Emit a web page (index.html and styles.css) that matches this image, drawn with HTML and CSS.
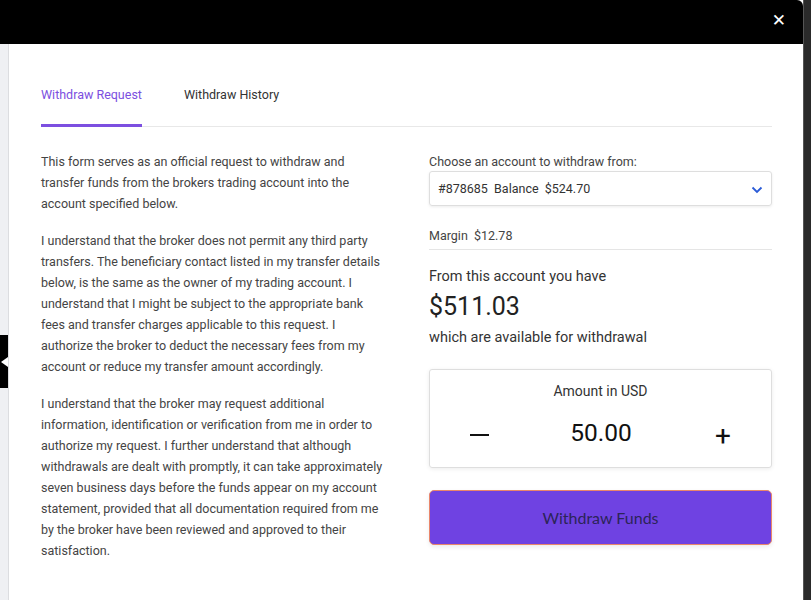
FILE: index.html
```html
<!DOCTYPE html>
<html>
<head>
<meta charset="utf-8">
<link rel="stylesheet" href="styles.css">
</head>
<body>
<div class="page">
  <div class="main">
    <div class="topbar">
      <span class="close">&#10005;</span>
    </div>
    <div class="content">
      <div class="sidestrip">
        <div class="sidetab">
          <svg width="8" height="14" viewBox="0 0 8 14"><path d="M8 2 L1 7 L8 12 Z" fill="#fff"/></svg>
        </div>
      </div>
      <div class="modal">
        <div class="tabs">
          <div class="tab active">Withdraw Request</div>
          <div class="tab">Withdraw History</div>
        </div>
        <div class="columns">
          <div class="terms">
            <p>This form serves as an official request to withdraw and transfer funds from the brokers trading account into the account specified below.</p>
            <p>I understand that the broker does not permit any third party transfers. The beneficiary contact listed in my transfer details below, is the same as the owner of my trading account. I understand that I might be subject to the appropriate bank fees and transfer charges applicable to this request. I authorize the broker to deduct the necessary fees from my account or reduce my transfer amount accordingly.</p>
            <p>I understand that the broker may request additional information, identification or verification from me in order to authorize my request. I further understand that although withdrawals are dealt with promptly, it can take approximately seven business days before the funds appear on my account statement, provided that all documentation required from me by the broker have been reviewed and approved to their satisfaction.</p>
          </div>
          <div class="form">
            <div class="label">Choose an account to withdraw from:</div>
            <div class="select">
              <span>#878685&nbsp; Balance&nbsp; $524.70</span>
              <svg width="12" height="8" viewBox="0 0 12 8"><path d="M1.5 1.5 L6 6 L10.5 1.5" fill="none" stroke="#2a5bd7" stroke-width="1.8"/></svg>
            </div>
            <div class="margin">Margin&nbsp; $12.78</div>
            <div class="avail">
              <div class="avail-text">From this account you have</div>
              <div class="avail-amount">$511.03</div>
              <div class="avail-text">which are available for withdrawal</div>
            </div>
            <div class="amount-box">
              <div class="amount-label">Amount in USD</div>
              <div class="amount-row">
                <span class="step minus"></span>
                <span class="amount-value">50.00</span>
                <span class="step plus">+</span>
              </div>
            </div>
            <button class="submit">Withdraw Funds</button>
          </div>
        </div>
      </div>
    </div>
  </div>
  <div class="rightstrip"></div>
</div>
</body>
</html>
```

FILE: styles.css
```css
html, body {
  margin: 0;
  padding: 0;
  height: 100%;
  overflow: hidden;
}
body {
  font-family: Roboto, "Liberation Sans", sans-serif;
  background: #2a2a2a;
}
.page {
  display: flex;
  height: 600px;
  width: 811px;
}
.main {
  width: 803px;
  flex-shrink: 0;
  display: flex;
  flex-direction: column;
  background: #fff;
}
.topbar {
  height: 44px;
  background: #000;
  border-top-right-radius: 6px;
  display: flex;
  justify-content: flex-end;
  align-items: center;
}
.close {
  color: #fff;
  font-size: 17px;
  font-family: "DejaVu Sans", sans-serif;
  margin-right: 17px;
  margin-top: -4px;
}
.content {
  flex: 1;
  display: flex;
}
.sidestrip {
  width: 8px;
  background: #eff0f3;
  border-right: 1px solid #dcdde0;
  position: relative;
}
.sidetab {
  position: absolute;
  left: 0;
  top: 291px;
  width: 8px;
  height: 53px;
  background: #000;
  display: flex;
  align-items: center;
}
.modal {
  flex: 1;
  padding: 0 31px 0 32px;
}
.tabs {
  display: flex;
  gap: 42px;
  border-bottom: 1px solid #e8e8e8;
  height: 82px;
}
.tab {
  font-size: 12.5px;
  color: #333;
  padding-top: 43px;
  box-sizing: border-box;
  height: 83px;
}
.tab.active {
  color: #7c4fe0;
  border-bottom: 3px solid #7c4fe0;
}
.columns {
  display: grid;
  grid-template-columns: 344px 343px;
  column-gap: 44px;
  padding-top: 24px;
}
.terms p {
  margin: 0 0 16px;
  font-size: 12.5px;
  line-height: 21px;
  color: #444;
}
.form {
  display: flex;
  flex-direction: column;
}
.label {
  font-size: 12.5px;
  color: #444;
  line-height: 21px;
}
.select {
  margin-top: -1px;
  height: 33px;
  border: 1px solid #dedede;
  border-radius: 3px;
  box-shadow: 0 1px 3px rgba(0,0,0,0.08);
  display: flex;
  align-items: center;
  justify-content: space-between;
  padding: 0 8px 0 8px;
  font-size: 12.5px;
  color: #333;
}
.select svg {
  margin-top: 3px;
}
.margin {
  margin-top: 22px;
  font-size: 12.5px;
  color: #444;
  padding-bottom: 6px;
  border-bottom: 1px solid #e5e5e5;
}
.avail {
  margin-top: 17px;
  color: #333;
}
.avail-text {
  font-size: 14.5px;
  line-height: 20px;
}
.avail-amount {
  font-size: 25px;
  line-height: 40px;
  padding-bottom: 1px;
  color: #222;
}
.amount-box {
  margin-top: 21px;
  height: 97px;
  border: 1px solid #dedede;
  border-radius: 3px;
  box-shadow: 0 1px 4px rgba(0,0,0,0.08);
  display: flex;
  flex-direction: column;
  align-items: center;
}
.amount-label {
  margin-top: 13px;
  font-size: 14px;
  color: #333;
}
.amount-row {
  margin-top: 13px;
  width: 100%;
  display: flex;
  align-items: center;
  justify-content: space-between;
  padding: 0 40px 0 40px;
  box-sizing: border-box;
}
.amount-value {
  font-size: 24.5px;
  color: #111;
  margin-left: -2px;
}
.step.minus {
  width: 19px;
  height: 2px;
  background: #111;
  margin-top: 6px;
}
.step.plus {
  font-size: 28px;
  color: #111;
  font-family: Roboto, sans-serif;
  font-weight: 400;
  margin-top: 7px;
}
.submit {
  margin-top: 22px;
  height: 55px;
  border: 1px solid #e9866b;
  border-radius: 5px;
  background: #6f42e2;
  color: #2c2458;
  font-family: Lato, "Open Sans", sans-serif;
  font-size: 16px;
  box-shadow: 0 2px 4px rgba(0,0,0,0.08);
}
.rightstrip {
  width: 7px;
  background: #2a2a2a;
  border-left: 1px solid #555;
}
```
